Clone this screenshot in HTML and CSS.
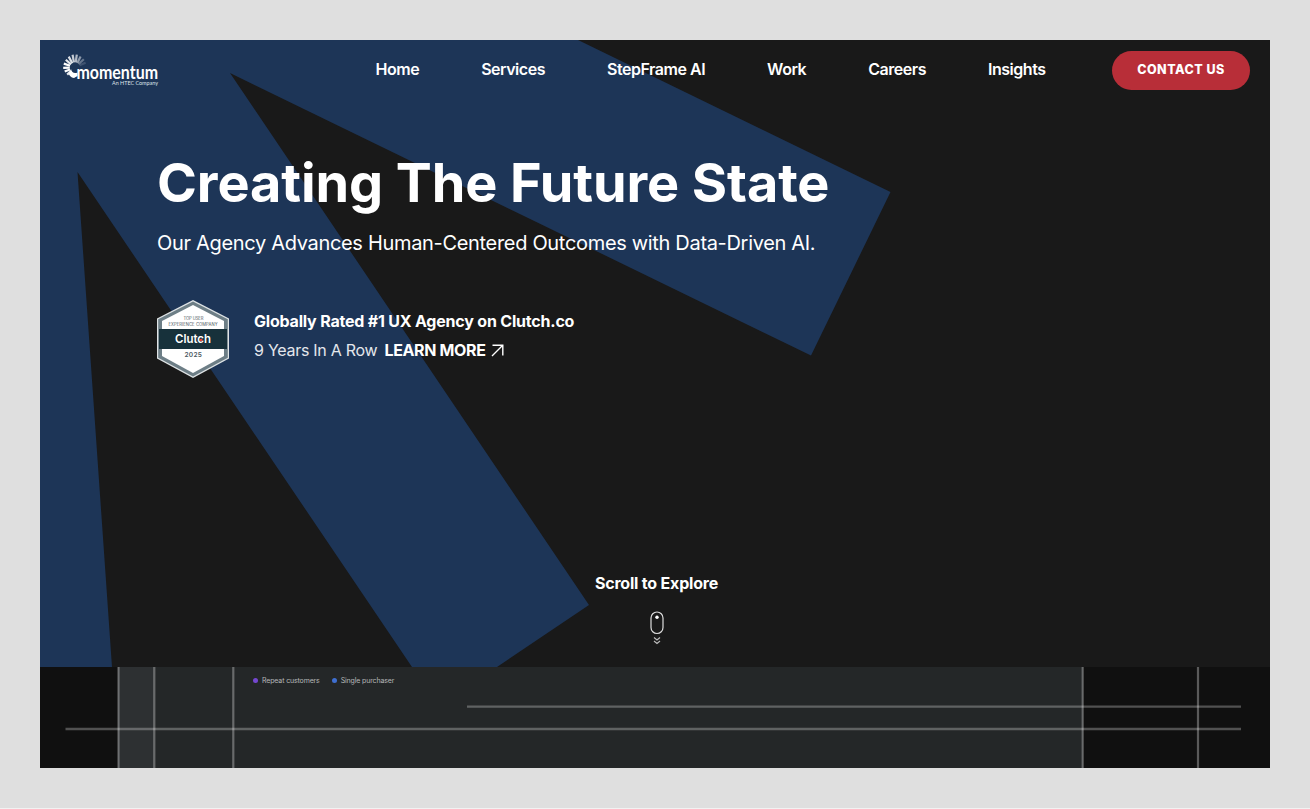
FILE: index.html
```html
<!DOCTYPE html>
<html lang="en">
<head>
    <meta charset="UTF-8">
    <meta name="viewport" content="width=device-width, initial-scale=1.0">
    <title>Momentum</title>
    <link rel="stylesheet" href="styles.css">
</head>
<body>

    <div class="page">
        <section class="hero">
            <svg class="hero-shape" viewBox="0 0 1230 627" aria-hidden="true">
                <polygon points="0,0 538,0 850.5,152 771,315.5 190,33 549,565 457,627 372,627 37.5,132 72,627 0,627" fill="#1d3557"/>
            </svg>

            <header class="navbar">
                <a href="#" class="logo">
                    <svg width="96" height="36" viewBox="0 0 96 36">
                        <g stroke="#fff" stroke-width="2.2">
                            <path d="M8 19L4.2 22.6" opacity=".9"/>
                            <path d="M7 17.4L1.7 19.6"/>
                            <path d="M6.8 15.6L0.2 15.8"/>
                            <path d="M7 13.8L0.8 11.6"/>
                            <path d="M8 12.4L2.8 7.8" opacity=".9"/>
                            <path d="M9.3 11.2L5.7 4.6" opacity=".85"/>
                            <path d="M10.9 10.4L9.6 2.8" opacity=".75"/>
                            <path d="M12.7 10.3L13.8 2.6" opacity=".65"/>
                            <path d="M14.3 10.9L17.6 4.4" opacity=".5"/>
                            <path d="M15.6 12L20.8 7.2" opacity=".32"/>
                            <path d="M16.6 13.2L22.6 10.8" opacity=".15"/>
                        </g>
                        <path d="M8 17C8.8 20.4 11 22 14.5 20.6L14.5 24L11 26C8 25.6 6 23.4 5.8 21.5z" fill="#fff"/>
                        <text class="logo-name" x="13.5" y="26.6" textLength="81.5" lengthAdjust="spacingAndGlyphs">momentum</text>
                        <text class="logo-tag" x="49" y="32.8" textLength="46" lengthAdjust="spacingAndGlyphs">An HTEC Company</text>
                    </svg>
                </a>
                <nav class="menu">
                    <a href="#">Home</a>
                    <a href="#">Services</a>
                    <a href="#">StepFrame AI</a>
                    <a href="#">Work</a>
                    <a href="#">Careers</a>
                    <a href="#">Insights</a>
                </nav>
                <a href="#" class="contact-btn">CONTACT US</a>
            </header>

            <div class="hero-content">
                <h1>Creating The Future State</h1>
                <p class="subtitle">Our Agency Advances Human-Centered Outcomes with Data-Driven AI.</p>

                <div class="award">
                    <svg class="clutch" width="72" height="78" viewBox="0 0 72 78">
                        <polygon points="36,0 72,18.5 72,58.5 36,78 0,58.5 0,18.5" fill="#dfe4e6"/>
                        <polygon points="36,1.5 70.8,19.2 70.8,57.8 36,76.4 1.2,57.8 1.2,19.2" fill="#6d7e86"/>
                        <polygon points="36,5 67,21 67,56 36,73 5,56 5,21" fill="#fff"/>
                        <rect x="2" y="29" width="68" height="20" fill="#17313b"/>
                        <text class="clutch-small" x="26.5" y="20.2" textLength="20" lengthAdjust="spacing">TOP USER</text>
                        <text class="clutch-small" x="11.5" y="26" textLength="49" lengthAdjust="spacing">EXPERIENCE COMPANY</text>
                        <text class="clutch-name" x="18" y="43.2" textLength="36" lengthAdjust="spacingAndGlyphs">Clutch</text>
                        <circle cx="44.2" cy="40" r="1.3" fill="#ef4335"/>
                        <text class="clutch-year" x="27.5" y="57.2" textLength="17.5" lengthAdjust="spacing">2025</text>
                    </svg>
                    <div class="award-text">
                        <strong>Globally Rated #1 UX Agency on Clutch.co</strong>
                        <div class="award-row">
                            <span class="years">9 Years In A Row</span>
                            <a href="#" class="learn">LEARN MORE</a>
                            <svg width="13" height="13" viewBox="0 0 13 13" fill="none" stroke="#fff" stroke-width="1.4">
                                <path d="M1 12L11.5 1.5M1.5 1.2H11.8V11.5"/>
                            </svg>
                        </div>
                    </div>
                </div>
            </div>

            <div class="scroll">
                <span>Scroll to Explore</span>
                <svg width="14" height="34" viewBox="0 0 14 34" fill="none" stroke="#ddd" stroke-width="1.2">
                    <rect x="1" y="1" width="12" height="21.5" rx="6"/>
                    <circle cx="7" cy="6.3" r="1.7" fill="#fff" stroke="none"/>
                    <path d="M4 26.5L7 29L10 26.5M4 30L7 32.5L10 30" stroke="#bbb"/>
                </svg>
            </div>
        </section>

        <section class="showcase">
            <svg class="guides" viewBox="0 0 1230 101" aria-hidden="true">
                <rect x="78" y="0" width="36" height="101" fill="#2d3032"/>
                <rect x="114" y="0" width="929" height="101" fill="#242728"/>
                <g stroke="#fff" stroke-width="2.2" opacity=".31">
                    <path d="M78.5 0V101"/>
                    <path d="M114.3 0V101"/>
                    <path d="M193.3 0V101"/>
                    <path d="M1042.7 0V101"/>
                    <path d="M1158 0V101"/>
                </g>
                <g stroke="#fff" stroke-width="2.3" opacity=".27">
                    <path d="M427 39.7H1201"/>
                    <path d="M25.5 62H1201"/>
                </g>
            </svg>
            <div class="legend">
                <span class="repeat">Repeat customers</span>
                <span class="single">Single purchaser</span>
            </div>
        </section>
    </div>

</body>
</html>
```
FILE: styles.css
```css
* {
    box-sizing: border-box;
}
body {
    margin: 0;
    height: 809px;
    padding: 40px;
    background: #dfdfdf;
    border-bottom: 1px solid #f2f2f2;
    font-family: Inter, "Liberation Sans", sans-serif;
    color: #fff;
    overflow: hidden;
}
a {
    color: inherit;
    text-decoration: none;
}
.page {
    width: 1230px;
    height: 728px;
    overflow: hidden;
}
.hero {
    position: relative;
    height: 627px;
    background: #191919;
    display: flex;
    flex-direction: column;
}
.hero-shape {
    position: absolute;
    inset: 0;
    width: 1230px;
    height: 627px;
}
.navbar,
.hero-content,
.scroll {
    position: relative;
}
.navbar {
    display: flex;
    align-items: center;
    height: 60px;
    padding: 0 20px 0 23px;
}
.logo {
    display: flex;
}
.logo svg {
    overflow: visible;
}
.logo-name {
    font-family: Lato, sans-serif;
    font-weight: 700;
    font-size: 18px;
    fill: #fff;
}
.logo-tag {
    font-family: Lato, sans-serif;
    font-size: 6px;
    fill: #dfe4ea;
}
.menu {
    display: flex;
    gap: 62px;
    margin-left: auto;
    margin-right: 66.5px;
    padding-bottom: 2px;
    font-size: 16px;
    font-weight: 600;
    letter-spacing: -0.47px;
}
.contact-btn {
    display: flex;
    align-items: center;
    justify-content: center;
    width: 138px;
    height: 39px;
    padding-bottom: 1px;
    border-radius: 20px;
    background: #b82e38;
    font-size: 12.5px;
    font-weight: 800;
    letter-spacing: 0.5px;
}
.hero-content {
    padding: 50px 0 0 117px;
}
h1 {
    margin: 0;
    font-size: 54px;
    line-height: 66px;
    font-weight: 700;
    letter-spacing: -0.1px;
    white-space: nowrap;
}
.subtitle {
    margin: 15px 0 0;
    font-size: 20px;
    line-height: 24px;
    letter-spacing: -0.32px;
    white-space: nowrap;
}
.award {
    display: flex;
    margin-top: 45px;
}
.award-text {
    margin-left: 25px;
    padding-top: 7px;
    font-size: 16px;
    line-height: 29px;
    white-space: nowrap;
}
.award-text strong {
    display: block;
    font-weight: 700;
    letter-spacing: -0.2px;
}
.award-row {
    display: flex;
    align-items: center;
}
.learn {
    margin: 0 5px 0 7px;
    font-weight: 700;
    letter-spacing: -0.35px;
}
.years {
    color: #e4e7ec;
    letter-spacing: -0.27px;
}
.clutch-small {
    font-size: 4.2px;
    fill: #4b5a61;
}
.clutch-name {
    font-size: 12px;
    font-weight: 600;
    fill: #fff;
}
.clutch-year {
    font-size: 6.6px;
    font-weight: 600;
    fill: #4b5a61;
}
.scroll {
    display: flex;
    flex-direction: column;
    align-items: center;
    gap: 18px;
    margin-top: auto;
    padding: 0 0 22px 3px;
    font-size: 16px;
    line-height: 20px;
    font-weight: 700;
    letter-spacing: -0.2px;
}
.showcase {
    position: relative;
    height: 101px;
    background: #101010;
}
.guides {
    position: absolute;
    inset: 0;
    width: 1230px;
    height: 101px;
}
.legend {
    position: relative;
    display: flex;
    gap: 12px;
    padding: 9px 0 0 213px;
    font-size: 7px;
    line-height: 9px;
    letter-spacing: -0.14px;
    color: #b5b7b8;
}
.legend span {
    display: flex;
    align-items: center;
    gap: 4px;
}
.legend span::before {
    content: "";
    width: 5px;
    height: 5px;
    border-radius: 50%;
}
.legend .repeat::before {
    background: #7447cf;
}
.legend .single::before {
    background: #3f6fd0;
}
```
